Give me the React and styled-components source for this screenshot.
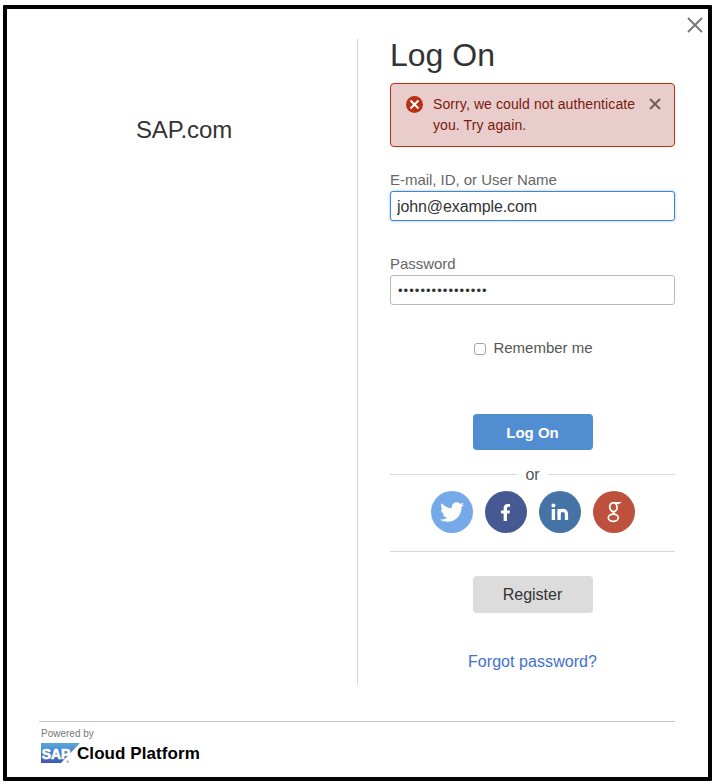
import React from "react";
import styled, { createGlobalStyle } from "styled-components";
import { FaTwitter, FaFacebookF } from "react-icons/fa";

const GlobalStyle = createGlobalStyle`
  * { box-sizing: border-box; }
  body {
    margin: 0;
    background: #fff;
    color: #333;
    font-family: "Liberation Sans", Arial, sans-serif;
  }
`;

const Dialog = styled.main`
  display: flex;
  flex-direction: column;
  width: 709px;
  height: 776px;
  margin: 5px 0 0 3px;
  padding: 30px 33px 0 32px;
  border: 4px solid #000;
  border-radius: 1px;
  position: relative;
`;

const CloseButton = styled.button`
  position: absolute;
  top: 8px;
  right: 5px;
  padding: 0;
  border: 0;
  background: none;
  line-height: 0;
`;

const Columns = styled.div`
  display: grid;
  grid-template-columns: 319px 317px;
  height: 646px;
`;

const Brand = styled.section`
  border-right: 1px solid #d4d4d4;
  padding: 77px 28px 0 0;
  text-align: center;
  font-size: 24px;
  line-height: 28px;
  letter-spacing: -0.1px;
`;

const Panel = styled.form`
  display: flex;
  flex-direction: column;
  padding-left: 32px;
`;

const Title = styled.h1`
  margin: 0;
  height: 44px;
  font-size: 32px;
  font-weight: 400;
  line-height: 32px;
`;

const Alert = styled.div`
  display: flex;
  height: 64px;
  padding: 10px 10px 0 15px;
  border: 1px solid #bf2e12;
  border-radius: 4px;
  background: #e9cdcd;
`;

const AlertText = styled.p`
  flex: none;
  margin: 0 0 0 10px;
  width: 216px;
  color: #7a1a0c;
  font-size: 14px;
  line-height: 21px;
  letter-spacing: 0.1px;
`;

const AlertIcon = styled.svg`
  flex: none;
  margin-top: 2px;
`;

const AlertClose = styled.span`
  flex: none;
  margin-top: 4px;
  line-height: 0;
`;

const Label = styled.label`
  display: block;
  margin-top: ${(p) => p.$gap}px;
  height: 20px;
  color: #666;
  font-size: 15px;
  line-height: 18px;
  letter-spacing: -0.03px;
`;

const Input = styled.input`
  width: 285px;
  height: 30px;
  padding: 1px 6px 0;
  border: 1px solid ${(p) => (p.$active ? "#3f85d6" : "#bababa")};
  border-radius: 3px;
  outline: 0;
  background: #fff;
  box-shadow: ${(p) => (p.$active ? "0 0 3px rgba(63, 133, 214, 0.55)" : "none")};
  color: #333;
  font: 16px "Liberation Sans", Arial, sans-serif;
  letter-spacing: -0.1px;

  &[type="password"] {
    padding: 0 7px;
    font-size: 13px;
    letter-spacing: 1.05px;
  }
`;

const Remember = styled.label`
  display: flex;
  align-items: center;
  align-self: center;
  gap: 7px;
  margin: 33px 0 1px 2px;
  height: 18px;
  color: #555;
  font-size: 15px;
`;

const Checkbox = styled.input`
  appearance: none;
  width: 12px;
  height: 12px;
  margin: 3px 0 0;
  border: 1px solid #a3a3a3;
  border-radius: 3px;
  background: #fff;
`;

const Button = styled.button`
  align-self: center;
  width: 120px;
  height: ${(p) => (p.$primary ? 36 : 37)}px;
  margin-top: ${(p) => (p.$primary ? 57 : 24)}px;
  padding: 0;
  border: 0;
  border-radius: 4px;
  background: ${(p) => (p.$primary ? "#518dd1" : "#dcdcdc")};
  color: ${(p) => (p.$primary ? "#fff" : "#333")};
  font: ${(p) => (p.$primary ? "bold 15px" : "16px")} "Liberation Sans", Arial, sans-serif;
`;

const Separator = styled.div`
  display: flex;
  align-items: center;
  gap: 8px;
  height: 18px;
  margin-top: 15px;
  color: #555;
  font-size: 16px;
  line-height: 18px;
  &::before, &::after {
    content: "";
    flex: 1;
    height: 1px;
    background: #dadada;
  }
`;

const SeparatorText = styled.span`
  padding-top: 2px;
`;

const SocialRow = styled.div`
  display: flex;
  justify-content: center;
  gap: 12px;
  height: 69px;
  padding-top: 8px;
  border-bottom: 1px solid #d8d8d8;
`;

const SocialLink = styled.a`
  display: flex;
  align-items: center;
  justify-content: center;
  width: 42px;
  height: 42px;
  border-radius: 50%;
  background: ${(p) => p.$color};
  color: #fff;
`;

const ForgotLink = styled.a`
  align-self: center;
  margin-top: 39px;
  color: #3e72cb;
  font-size: 16px;
  line-height: 20px;
  letter-spacing: 0.06px;
`;

const Footer = styled.footer`
  margin-top: 36px;
  border-top: 1px solid #c8c8c8;
  padding: 6px 0 0 2px;
`;

const Powered = styled.div`
  height: 15px;
  color: #777;
  font-size: 10px;
  line-height: 12px;
`;

const Product = styled.div`
  display: flex;
  height: 20px;
`;

const ProductName = styled.span`
  margin-left: -3px;
  color: #000;
  font: bold 17px/21px "Liberation Sans", Arial, sans-serif;
  letter-spacing: 0.08px;
  white-space: nowrap;
`;

const Cross = ({ size, weight, color }) => (
  <svg width={size} height={size} viewBox={`0 0 ${size} ${size}`} fill="none" stroke={color} strokeWidth={weight}>
    <path d={`M1 1L${size - 1} ${size - 1}M${size - 1} 1L1 ${size - 1}`} />
  </svg>
);

const LinkedInMark = () => (
  <svg width="18" height="18" viewBox="0 0 18 18" fill="none" stroke="#fff">
    <circle cx="2.4" cy="2.6" r="2" fill="#fff" stroke="none" />
    <path d="M2.4 6V17" strokeWidth="3.4" />
    <path d="M8.1 6V17" strokeWidth="3.3" />
    <path d="M8.1 11C8.1 8.6 9.4 7.3 11.6 7.3C14.3 7.3 15.5 8.8 15.5 11.6V17" strokeWidth="3.2" />
  </svg>
);

const GoogleG = () => (
  <svg width="16" height="22" viewBox="0 0 16 22" fill="none" stroke="#fff">
    <ellipse cx="7.4" cy="6.2" rx="3.6" ry="4.5" strokeWidth="1.8" transform="rotate(-10 7.4 6.2)" />
    <path d="M7 1.6H14L12.5 2.7H10" strokeWidth="1.2" />
    <path d="M8.8 10.3C6.4 11.6 6.8 12.5 9 13.4" strokeWidth="1.8" />
    <ellipse cx="7.3" cy="16.7" rx="5" ry="3.6" strokeWidth="1.7" />
  </svg>
);

const SapLogo = () => (
  <svg width="39" height="20" viewBox="0 0 39 20">
    <defs>
      <linearGradient id="sap" x1="0" y1="0" x2="0" y2="1">
        <stop offset="0" stopColor="#57a8df" />
        <stop offset="1" stopColor="#3e57ad" />
      </linearGradient>
    </defs>
    <path d="M0 0H39L20 20H0Z" fill="url(#sap)" />
    <text x="0.8" y="15.6" fill="#fff" stroke="#fff" strokeWidth="0.7" fontFamily="Liberation Sans, Arial, sans-serif" fontWeight="bold" fontSize="15.5" textLength="28.5" lengthAdjust="spacingAndGlyphs">SAP</text>
    <circle cx="26.7" cy="18.6" r="0.8" fill="none" stroke="#5579bd" strokeWidth="0.7" />
  </svg>
);

export default function App() {
  return (
    <>
      <GlobalStyle />
      <Dialog>
        <CloseButton type="button" aria-label="Close">
          <Cross size={16} weight={1.9} color="#777" />
        </CloseButton>
        <Columns>
          <Brand>SAP.com</Brand>
          <Panel>
            <Title>Log On</Title>
            <Alert role="alert">
              <AlertIcon width="17" height="17" viewBox="0 0 17 17">
                <circle cx="8.5" cy="8.5" r="8.5" fill="#bb3013" />
                <path d="M4.5 4.5L12.5 12.5M12.5 4.5L4.5 12.5" stroke="#fff" strokeWidth="2" />
              </AlertIcon>
              <AlertText>Sorry, we could not authenticate<br />you. Try again.</AlertText>
              <AlertClose><Cross size={12} weight={1.9} color="#6b5b5b" /></AlertClose>
            </Alert>
            <Label $gap={24} htmlFor="user">E-mail, ID, or User Name</Label>
            <Input id="user" $active defaultValue="john@example.com" />
            <Label $gap={34} htmlFor="password">Password</Label>
            <Input id="password" type="password" defaultValue="examplepassword1" />
            <Remember>
              <Checkbox type="checkbox" />
              Remember me
            </Remember>
            <Button type="button" $primary>Log On</Button>
            <Separator><SeparatorText>or</SeparatorText></Separator>
            <SocialRow>
              <SocialLink $color="#76a9ea" aria-label="Twitter"><FaTwitter size={24} /></SocialLink>
              <SocialLink $color="#475993" aria-label="Facebook"><FaFacebookF size={17} /></SocialLink>
              <SocialLink $color="#4573a5" aria-label="LinkedIn"><LinkedInMark /></SocialLink>
              <SocialLink $color="#bd513d" aria-label="Google"><GoogleG /></SocialLink>
            </SocialRow>
            <Button type="button">Register</Button>
            <ForgotLink>Forgot password?</ForgotLink>
          </Panel>
        </Columns>
        <Footer>
          <Powered>Powered by</Powered>
          <Product>
            <SapLogo />
            <ProductName>Cloud Platform</ProductName>
          </Product>
        </Footer>
      </Dialog>
    </>
  );
}
